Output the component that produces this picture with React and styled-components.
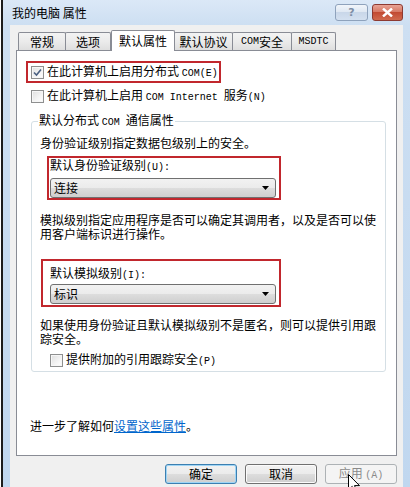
import styled, { createGlobalStyle } from 'styled-components'

const GlobalStyle = createGlobalStyle`
  html, body {
    margin: 0;
    padding: 0;
    background: #ffffff;
  }
  body {
    font-family: "Noto Sans CJK SC", "Noto Sans", sans-serif;
    font-size: 12px;
    color: #000;
  }
`

const Latin = styled.span`
  font-family: "Liberation Mono", "DejaVu Sans Mono", monospace;
  font-size: 10px;
`

const tabs = [
  { label: '常规', w: 48 },
  { label: '选项', w: 46 },
  { label: '默认属性', w: 64, active: true },
  { label: '默认协议', w: 59 },
  { label: <><Latin>COM </Latin>安全</>, key: 'com', w: 60 },
  { label: <Latin>MSDTC</Latin>, key: 'msdtc', w: 45 },
]

const Check = ({ checked }) => (
  <CheckBox>
    {checked && (
      <svg width="9" height="9" viewBox="0 0 9 9">
        <path d="M1 4.5 L3.5 7 L8 1.5" fill="none" stroke="#4a5f80" strokeWidth="1.6" />
      </svg>
    )}
  </CheckBox>
)

const Combo = ({ value }) => (
  <ComboBox>
    <span>{value}</span>
    <svg width="7" height="4" viewBox="0 0 7 4">
      <path d="M0 0 H7 L3.5 4 Z" fill="#000" />
    </svg>
  </ComboBox>
)

const App = () => {
  return (
    <>
      <GlobalStyle />
      <Window>
        <TitleBar>
          <span>我的电脑 属性</span>
          <TitleButtons>
            <CaptionButton>?</CaptionButton>
            <CaptionButton $close>
              <svg width="11" height="9" viewBox="0 0 11 9">
                <path d="M1 0.5 L10 8.5 M10 0.5 L1 8.5" stroke="#fff" strokeWidth="2.4" />
              </svg>
            </CaptionButton>
          </TitleButtons>
        </TitleBar>
        <Body>
          <Client>
            <TabStrip>
              {tabs.map((t) => (
                <Tab key={t.key || t.label} $w={t.w} $active={t.active}>
                  {t.label}
                </Tab>
              ))}
            </TabStrip>
            <Panel>
              <Highlight $w={195} $h={22} $pad="0 0 0 3px">
                <CheckRow>
                  <Check checked />
                  <span>在此计算机上启用分布式 <Latin>COM(E)</Latin></span>
                </CheckRow>
              </Highlight>
              <CheckRow $mt={6} $ml={5}>
                <Check />
                <span>在此计算机上启用 <Latin>COM Internet </Latin>服务<Latin>(N)</Latin></span>
              </CheckRow>
              <Group>
                <legend>默认分布式 <Latin>COM </Latin>通信属性</legend>
                <Para>身份验证级别指定数据包级别上的安全。</Para>
                <Highlight $w={234} $mt={6} $ml={7} $pad="0 0 0 1px">
                  <Label>默认身份验证级别<Latin>(U):</Latin></Label>
                  <Combo value="连接" />
                </Highlight>
                <Para $mt={13}>
                  模拟级别指定应用程序是否可以确定其调用者，以及是否可以使用客户端标识进行操作。
                </Para>
                <Highlight $w={240} $mt={18} $ml={1} $pad="5px 0 1px 7px">
                  <Label $gap={1}>默认模拟级别<Latin>(I):</Latin></Label>
                  <Combo value="标识" />
                </Highlight>
                <Para $mt={11}>
                  如果使用身份验证且默认模拟级别不是匿名，则可以提供引用跟踪安全。
                </Para>
                <CheckRow $mt={7} $ml={10}>
                  <Check />
                  <span>提供附加的引用跟踪安全<Latin>(P)</Latin></span>
                </CheckRow>
              </Group>
              <LearnMore>
                进一步了解如何<a href="#">设置这些属性</a>。
              </LearnMore>
            </Panel>
            <ButtonRow>
              <Button $default>确定</Button>
              <Button>取消</Button>
              <Button disabled>应用 <Latin>(A)</Latin></Button>
            </ButtonRow>
          </Client>
        </Body>
        <Cursor width="12" height="19" viewBox="0 0 12 19">
          <path
            d="M0.5 0.5 L0.5 16 L4.2 12.4 L6.8 18.2 L9 17.2 L6.5 11.6 L11.5 11.6 Z"
            fill="#fff"
            stroke="#000"
            strokeWidth="1"
          />
        </Cursor>
      </Window>
    </>
  )
}

const Window = styled.div`
  position: relative;
  margin-left: 1px;
  width: 409px;
  height: 487px;
  box-sizing: border-box;
  border-left: 2px solid #1c1c1c;
  background: linear-gradient(180deg, #dbe8f7 0px, #cddff2 25px, #c0d7ef 100%);
  display: flex;
  flex-direction: column;
  overflow: hidden;
`

const TitleBar = styled.div`
  height: 25px;
  flex: none;
  display: flex;
  align-items: center;
  justify-content: space-between;
  padding: 0 7px 0 9px;
  font-size: 12px;
  color: #000;
`

const TitleButtons = styled.div`
  display: flex;
  gap: 4px;
  align-self: flex-start;
  margin-top: 4px;
`

const CaptionButton = styled.div`
  width: ${(p) => (p.$close ? 31 : 33)}px;
  height: 17px;
  box-sizing: border-box;
  border: 1px solid ${(p) => (p.$close ? '#8d3a32' : '#8ea2bc')};
  border-radius: 3px;
  display: flex;
  align-items: center;
  justify-content: center;
  font-family: "DejaVu Sans", sans-serif;
  font-size: 11px;
  font-weight: bold;
  color: #7d8ea6;
  background: ${(p) =>
    p.$close
      ? 'linear-gradient(180deg, #e8a395 0%, #d77a66 45%, #c24b33 50%, #d06a4e 100%)'
      : 'linear-gradient(180deg, #f1f5fa 0%, #dfe8f3 45%, #c9d7e9 50%, #d3e0f0 100%)'};
`

const Body = styled.div`
  flex: 1;
  display: flex;
  padding: 0 7px;
`

const Client = styled.div`
  flex: 1;
  background: #f0f0f0;
  padding: 5px 6px 0 6px;
  display: flex;
  flex-direction: column;
`

const TabStrip = styled.div`
  display: flex;
  align-items: flex-end;
  padding-left: 2px;
`

const Tab = styled.div`
  position: relative;
  box-sizing: border-box;
  width: ${(p) => p.$w}px;
  height: ${(p) => (p.$active ? 21 : 18)}px;
  margin-left: ${(p) => (p.$active ? 0 : -1)}px;
  margin-bottom: ${(p) => (p.$active ? -1 : 0)}px;
  z-index: ${(p) => (p.$active ? 1 : 0)};
  border: 1px solid #898c95;
  border-bottom: none;
  border-radius: 2px 2px 0 0;
  background: ${(p) =>
    p.$active ? '#ffffff' : 'linear-gradient(180deg, #f3f3f3 0%, #ebebeb 50%, #dedede 100%)'};
  display: flex;
  align-items: center;
  justify-content: center;
  font-size: 12px;
  line-height: 14px;
  padding-top: ${(p) => (p.$active ? 0 : 1)}px;
  white-space: nowrap;

  &:first-child {
    margin-left: 0;
  }
`

const Panel = styled.div`
  height: 406px;
  box-sizing: border-box;
  background: #fff;
  border: 1px solid #898c95;
  padding: 10px 0 0 9px;
  display: flex;
  flex-direction: column;
  align-items: flex-start;
`

const Highlight = styled.div`
  box-sizing: border-box;
  width: ${(p) => p.$w}px;
  height: ${(p) => (p.$h ? `${p.$h}px` : 'auto')};
  margin: ${(p) => p.$mt || 0}px 0 0 ${(p) => p.$ml || 0}px;
  border: 2px solid #c1272d;
  padding: ${(p) => p.$pad};
  display: flex;
  flex-direction: column;
  justify-content: center;
`

const CheckRow = styled.div`
  display: flex;
  align-items: center;
  gap: 3px;
  height: 14px;
  line-height: 14px;
  margin: ${(p) => p.$mt || 0}px 0 0 ${(p) => p.$ml || 0}px;
  white-space: nowrap;
`

const CheckBox = styled.span`
  width: 13px;
  height: 13px;
  box-sizing: border-box;
  flex: none;
  border: 1px solid #8e8f8f;
  background: linear-gradient(135deg, #dedede 0%, #f4f4f4 60%, #ffffff 100%);
  box-shadow: inset 0 0 0 1px #f6f6f6;
  display: flex;
  align-items: center;
  justify-content: center;
`

const Group = styled.fieldset`
  margin: 10px 0 0 5px;
  width: 355px;
  box-sizing: border-box;
  min-inline-size: 0;
  border: 1px solid #d5dfe5;
  border-radius: 3px;
  padding: 6px 0 4px 8px;

  legend {
    padding: 0 1px;
    margin-left: -2px;
    line-height: 14px;
  }
`

const Para = styled.p`
  margin: ${(p) => p.$mt || 0}px 0 0 0;
  line-height: 14px;
`

const Label = styled.div`
  line-height: 14px;
  margin-bottom: ${(p) => (p.$gap !== undefined ? p.$gap : 3)}px;
`

const ComboBox = styled.div`
  width: 226px;
  height: 20px;
  box-sizing: border-box;
  border: 1px solid #707070;
  border-radius: 3px;
  background: linear-gradient(180deg, #f2f2f2 0%, #ebebeb 50%, #dddddd 50%, #cfcfcf 100%);
  display: flex;
  align-items: center;
  justify-content: space-between;
  padding: 0 6px 0 3px;
  line-height: 14px;
`

const LearnMore = styled.div`
  margin: auto 0 22px 4px;
  line-height: 14px;

  a {
    color: #0066cc;
    text-decoration: underline;
  }
`

const ButtonRow = styled.div`
  display: flex;
  justify-content: flex-end;
  gap: 8px;
  margin-top: 8px;
`

const Button = styled.button`
  width: 72px;
  height: 20px;
  box-sizing: border-box;
  padding: 0;
  font-family: inherit;
  font-size: 12px;
  line-height: 14px;
  border-radius: 3px;
  border: 1px solid ${(p) => (p.$default ? '#3c7fb1' : '#707070')};
  box-shadow: ${(p) => (p.$default ? 'inset 0 0 0 1px #9fd5f5' : 'inset 0 0 0 1px #fbfbfb')};
  background: linear-gradient(180deg, #f2f2f2 0%, #ebebeb 50%, #dddddd 50%, #cfcfcf 100%);
  color: #000;

  &:disabled {
    border-color: #adb2b5;
    box-shadow: none;
    background: #f4f4f4;
    color: #8a8a8a;
  }
`

const Cursor = styled.svg`
  position: absolute;
  left: 345px;
  top: 474px;
`

export default App
